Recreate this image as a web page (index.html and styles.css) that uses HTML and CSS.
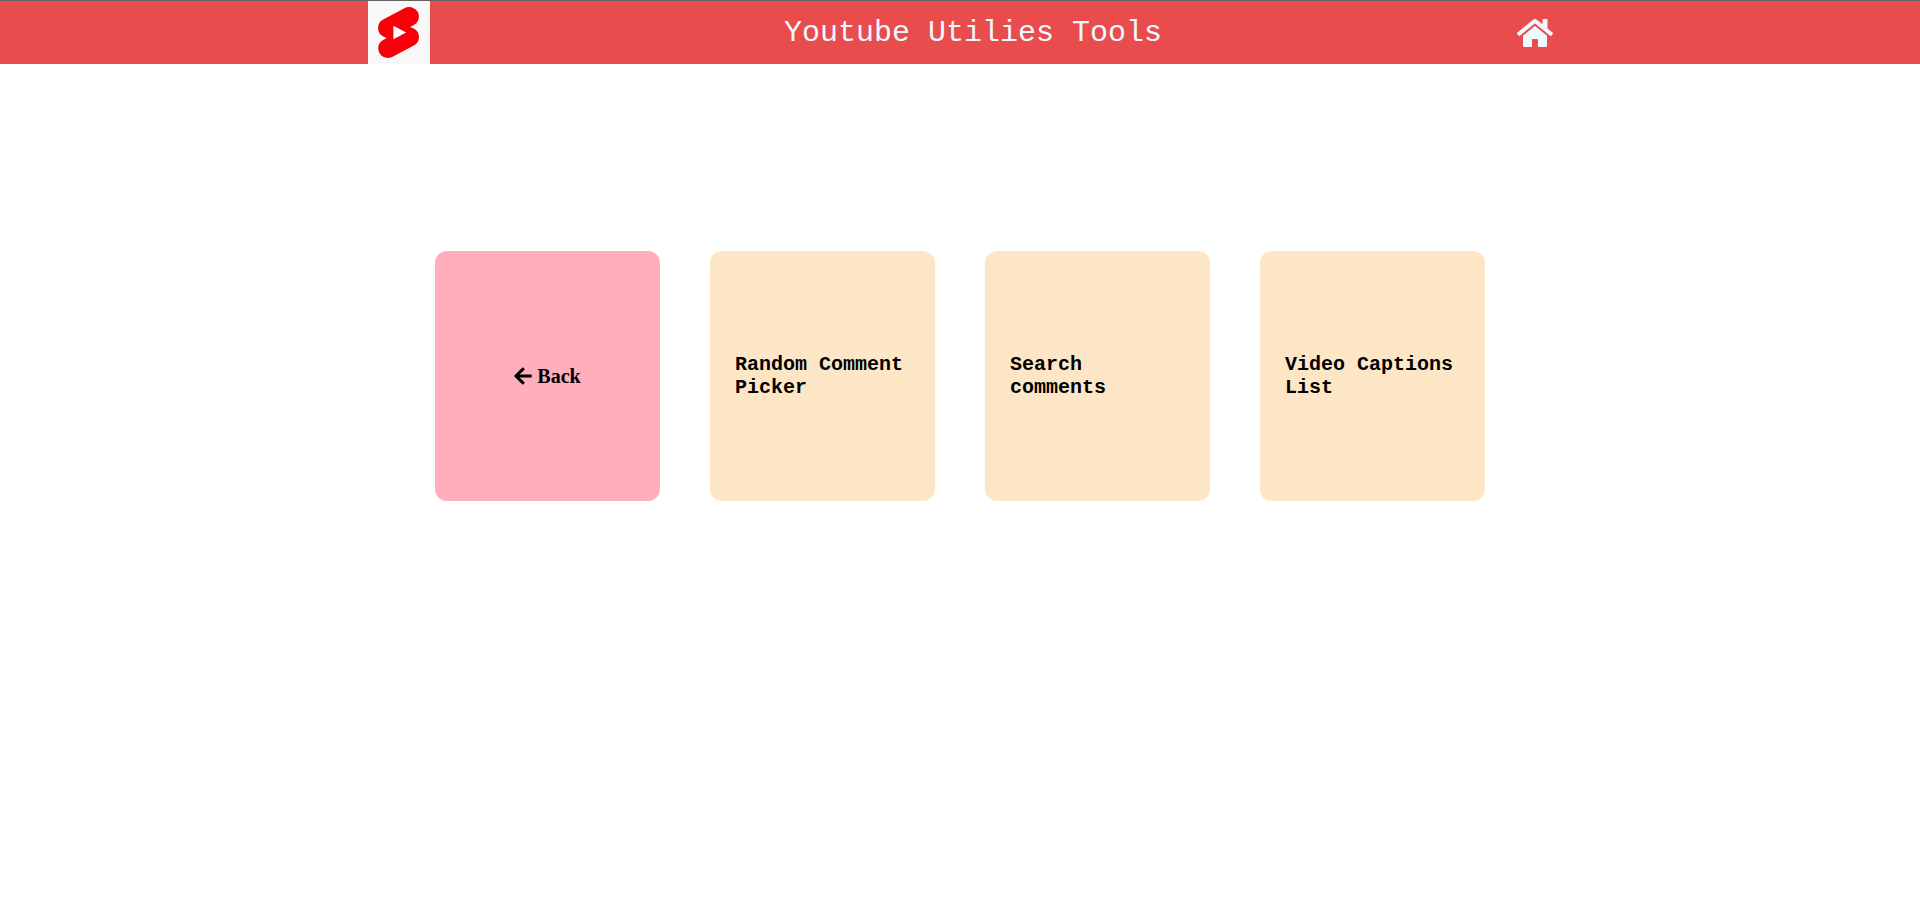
FILE: index.html
```html
<!DOCTYPE html>
<html lang="en">
<head>
<meta charset="utf-8">
<meta name="viewport" content="width=device-width, initial-scale=1">
<title>Youtube Utilies Tools</title>
<link rel="stylesheet" href="styles.css">
</head>
<body>
<header class="header">
  <div class="header-inner">
    <div class="logo">
      <svg class="logo-mark" viewBox="0 0 24 24" role="img" aria-label="Shorts logo">
        <path fill="#fff" d="M9 8h7.500v8H9z"/>
        <path fill="#f70009" d="m18.931 9.99-1.441-.601 1.717-.913a4.48 4.48 0 0 0 1.874-6.078 4.506 4.506 0 0 0-6.09-1.874L4.792 5.929a4.504 4.504 0 0 0-2.402 4.193 4.521 4.521 0 0 0 2.666 3.904c.036.012 1.442.6 1.442.6l-1.706.901a4.51 4.51 0 0 0-2.369 3.967A4.528 4.528 0 0 0 6.93 24c.725 0 1.437-.174 2.08-.508l10.21-5.406a4.494 4.494 0 0 0 2.39-4.192 4.525 4.525 0 0 0-2.678-3.904ZM9.597 15.19V8.824l6.007 3.184z"/>
      </svg>
    </div>
    <h1 class="title">Youtube Utilies Tools</h1>
    <a class="home" href="#" aria-label="Home">
      <svg class="home-icon" viewBox="0 0 576 512" aria-hidden="true">
        <path fill="currentColor" d="M280.37 148.26L96 300.11V464a16 16 0 0 0 16 16l112.06-.29a16 16 0 0 0 15.92-16V368a16 16 0 0 1 16-16h64a16 16 0 0 1 16 16v95.64a16 16 0 0 0 16 16.05L464 480a16 16 0 0 0 16-16V300L295.67 148.26a12.19 12.19 0 0 0-15.3 0zM571.6 251.47L488 182.56V44.05a12 12 0 0 0-12-12h-56a12 12 0 0 0-12 12v72.61L318.47 43a48 48 0 0 0-61 0L4.34 251.47a12 12 0 0 0-1.6 16.9l25.5 31A12 12 0 0 0 45.15 301l235.22-193.74a12.19 12.19 0 0 1 15.3 0L530.9 301a12 12 0 0 0 16.9-1.6l25.5-31a12 12 0 0 0-1.7-16.93z"/>
      </svg>
    </a>
  </div>
</header>
<main class="cards">
  <a class="card card-back" href="#">
    <svg class="back-icon" viewBox="0 0 448 512" aria-hidden="true">
      <path fill="currentColor" d="M257.5 445.1l-22.2 22.2c-9.4 9.4-24.6 9.4-33.9 0L7 273c-9.4-9.4-9.4-24.6 0-33.9L201.4 44.7c9.4-9.4 24.6-9.4 33.9 0l22.2 22.2c9.5 9.5 9.3 25-.4 34.3L136.600 216H424c13.300 0 24 10.700 24 24v32c0 13.300-10.700 24-24 24H136.600l120.500 114.800c9.800 9.300 10 24.800.4 34.300z"/>
    </svg>
    <span>Back</span>
  </a>
  <a class="card" href="#">Random Comment Picker</a>
  <a class="card" href="#">Search comments</a>
  <a class="card" href="#">Video Captions List</a>
</main>
</body>
</html>
```

FILE: styles.css
```css
* {
  box-sizing: border-box;
}

body {
  margin: 0;
  background: #fff;
  font-family: "Liberation Mono", "Courier New", monospace;
}

.header {
  border-top: 1px solid #666064;
  background: #e84c4c;
  color: aliceblue;
}

.header-inner {
  display: flex;
  align-items: center;
  justify-content: space-between;
  max-width: 1185px;
  margin: 0 auto;
}

.logo {
  display: flex;
  align-items: center;
  justify-content: center;
  width: 62px;
  height: 63px;
  background: #f8f8f8;
}

.logo-mark {
  width: 51px;
  height: 51px;
}

.title {
  margin: 0;
  font-size: 30px;
  font-weight: 400;
  line-height: 34px;
}

.home {
  display: flex;
  color: inherit;
}

.home-icon {
  width: 36px;
  height: 32px;
}

.cards {
  display: flex;
  flex-wrap: wrap;
  justify-content: center;
  gap: 50px;
  padding: 187px 50px 50px;
}

.card {
  display: flex;
  align-items: center;
  width: 225px;
  min-height: 250px;
  padding: 25px;
  border-radius: 12px;
  background: #fce6c6;
  color: #000;
  font-size: 20px;
  font-weight: 700;
  line-height: 23px;
  text-decoration: none;
}

.card-back {
  justify-content: center;
  gap: 5px;
  background: #ffaebc;
  font-family: "Liberation Serif", "Times New Roman", serif;
}

.back-icon {
  width: 18px;
  height: 20px;
}
```
